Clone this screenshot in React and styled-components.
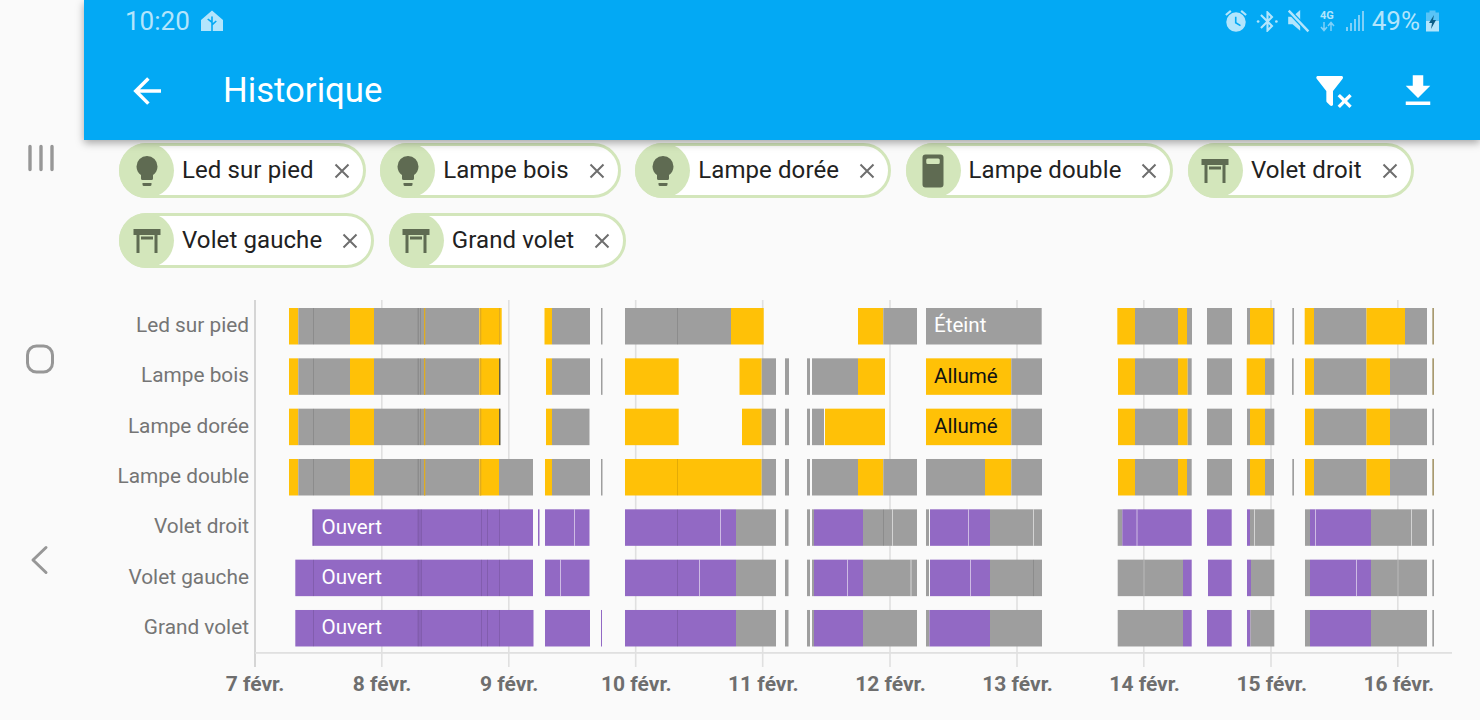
import React from 'react';
import styled, { createGlobalStyle } from 'styled-components';

const Global = createGlobalStyle`
  html, body { margin: 0; padding: 0; background: #fafafa; overflow: hidden; }
  body { font-family: Roboto, "Liberation Sans", sans-serif; }
`;

const Page = styled.div`
  display: flex;
  width: 1480px;
  height: 720px;
  background: #fafafa;
  overflow: hidden;
`;
const NavRail = styled.nav`
  width: 84px;
  flex: none;
  height: 720px;
  box-sizing: border-box;
  padding: 143px 0 144px;
  display: flex;
  flex-direction: column;
  justify-content: space-between;
  align-items: center;
`;
const NavIcon = styled.svg`
  display: block;
  width: 34px;
  height: 32px;
  margin-left: -2px;
  fill: none;
  stroke: #979797;
  stroke-linecap: round;
  stroke-linejoin: round;
`;
const Main = styled.main`
  flex: 1;
  min-width: 0;
  display: flex;
  flex-direction: column;
`;
const Header = styled.header`
  position: relative;
  z-index: 2;
  height: 140px;
  background: #03a9f4;
  box-shadow: 0 3px 8px rgba(0, 0, 0, 0.34);
  color: #fff;
  flex: none;
`;
const StatusBar = styled.div`
  height: 42px;
  box-sizing: border-box;
  padding: 0 40px 0 41px;
  display: flex;
  align-items: center;
  color: #b3e5fc;
  font-size: 26px;
`;
const StatusTime = styled.span`
  margin-right: 11px;
`;
const Spacer = styled.div`
  flex: 1;
`;
const StatusGlyph = styled.svg`
  display: block;
  flex: none;
  fill: #b3e5fc;
  margin-right: ${(p) => p.$mr || 0}px;
`;
const NetText = styled.text`
  font: 700 11px Roboto, sans-serif;
  fill: #b3e5fc;
`;
const Battery = styled.span`
  margin: 0 5px 0 -1px;
  letter-spacing: 0;
`;
const Toolbar = styled.div`
  height: 98px;
  display: flex;
  align-items: center;
  padding-left: 42px;
`;
const BarIcon = styled.svg`
  display: block;
  flex: none;
  fill: #fff;
  margin: ${(p) => p.$m || 0};
`;
const Title = styled.h1`
  margin: 0 0 2px 55px;
  font-size: 34.7px;
  font-weight: 400;
  line-height: 1;
  color: #fff;
`;
const ChipArea = styled.section`
  padding: 3px 0 0 35px;
  display: flex;
  flex-wrap: wrap;
  gap: 15px 14.5px;
  width: 1340px;
  box-sizing: border-box;
`;
const ChipBox = styled.div`
  height: 55px;
  box-sizing: border-box;
  border: 3px solid #d3e6bb;
  border-radius: 28px;
  background: #fff;
  display: flex;
  align-items: center;
  padding-right: 12px;
`;
const ChipIcon = styled.span`
  width: 55px;
  height: 55px;
  margin-left: -3px;
  flex: none;
  border-radius: 50%;
  background: #d3e6bb;
  display: flex;
  align-items: center;
  justify-content: center;
`;
const ChipGlyph = styled.svg`
  display: block;
  width: 36px;
  height: 36px;
  fill: #5f6b52;
`;
const ChipLabel = styled.span`
  margin-left: 8px;
  padding-bottom: 2px;
  font-size: 24px;
  letter-spacing: 0.1px;
  color: #212121;
  white-space: nowrap;
`;
const ChipClose = styled.svg`
  display: block;
  flex: none;
  width: 18px;
  height: 18px;
  margin-left: 19px;
  stroke: #6e6e6e;
  stroke-width: 2;
  fill: none;
`;
const Chart = styled.section`
  margin-top: 31.5px;
  display: grid;
  grid-template-columns: 165px 1fr;
  column-gap: 1px;
`;
const RowLabels = styled.div`
  padding-top: 0.5px;
  display: flex;
  flex-direction: column;
`;
const RowLabel = styled.div`
  height: 50.33px;
  display: flex;
  align-items: center;
  justify-content: flex-end;
  font-size: 20.8px;
  color: #757575;
  white-space: nowrap;
`;
const Plot = styled.svg`
  display: block;
  width: 1230px;
  height: 368px;
`;
const BarText = styled.text`
  font: 400 20.6px Roboto, sans-serif;
  dominant-baseline: central;
`;
const Axis = styled.div`
  margin: 4px 0 0 107.45px;
  display: flex;
`;
const AxisLabel = styled.div`
  width: 127.1px;
  flex: none;
  text-align: center;
  font-size: 21px;
  font-weight: 700;
  color: #6e6e6e;
  white-space: nowrap;
`;

const COLORS = {
  Y: '#ffc107',
  G: '#9e9e9e',
  P: '#9269c4',
  d: 'rgba(0,0,0,0.11)',
  w: 'rgba(255,255,255,0.55)',
  y: '#e0ac20',
  D: '#5f5a48',
  T: '#a89a70',
  l: 'rgba(255,255,255,0.3)',
};

const marksA = 'd313-314 d417.5-419 d420-421 y424-425.3 y480-481.3';
const marksB = 'd313-314 d417.5-419.5 d420.5-422 d481-482 d487-488 d499-500 d677-678';

const rows = [
  {
    label: 'Led sur pied',
    segs: `Y289-298.3 G298.3-350 Y350-374 G374-479.3 Y479.3-501.7 Y544.5-552 G552-590 G601-602.5 G625-731 Y731-763.7 Y858-883.3 G883.3-917 G926-1041.7 Y1117.3-1135 G1135-1178 Y1178-1187 G1187-1192 G1207-1232 G1247-1250 Y1250-1273 G1273-1274.5 G1292.3-1294 Y1304.7-1314 G1314-1366.5 Y1366.5-1405 G1405-1427 T1432.3-1434 ${marksA} d677-678 y499-500`,
    text: { s: 'Éteint', c: '#fff', x: 934 },
  },
  {
    label: 'Lampe bois',
    segs: `Y289-298.3 G298.3-350 Y350-374 G374-479.3 Y479.3-499 D499-500.5 Y546-552 G552-590 G601-602.5 Y625-678.7 Y739.5-761.7 G761.7-776 G785-789 G807-810 G812-858 Y858-885 Y926-1011.3 G1011.3-1042 Y1118-1135 G1135-1178 Y1178-1187.7 G1187.7-1191.7 G1207-1232 Y1246.7-1265 G1265-1274.3 G1292-1293.7 Y1305-1314 G1314-1366.5 Y1366.5-1390 G1390-1427 T1432.3-1434 ${marksA}`,
    text: { s: 'Allumé', c: '#111', x: 934 },
  },
  {
    label: 'Lampe dorée',
    segs: `Y289-298.3 G298.3-350 Y350-374 G374-479.3 Y479.3-499 D499-500.5 Y546-552 G552-589.5 Y625-678.7 Y742-761.7 G761.7-776 G785-789 G807-810 G812-824 Y825-885 Y926-1011.3 G1011.3-1042 Y1118-1135 G1135-1178 Y1178-1187.7 G1187.7-1191.7 G1207-1232 G1247-1250 Y1250-1265 G1265-1274.3 Y1305-1314 G1314-1366.5 Y1366.5-1390 G1390-1427 G1432.3-1434 ${marksA}`,
    text: { s: 'Allumé', c: '#111', x: 934 },
  },
  {
    label: 'Lampe double',
    segs: `Y289-298.3 G298.3-350 Y350-374 G374-479.3 Y479.3-499 G499-533 Y545-552 G552-590 G601-602.5 Y625-761.7 G761.7-776 G785-789 G807-810 G812-858 Y858-883.3 G883.3-917 G926-985 Y985-1011.3 G1011.3-1042 Y1118-1135 G1135-1178 Y1178-1187 G1187-1191.7 G1207-1232 G1247-1250 Y1250-1265 G1265-1274 G1292.3-1294 Y1305-1314 G1314-1366.5 Y1366.5-1390 G1390-1427 T1432.3-1434 ${marksA} d677-678`,
  },
  {
    label: 'Volet droit',
    segs: `P312.3-533 P538-539.5 P545-589.5 w574-575 P625-736 w720-721 G736-776 G785-788.5 G807-810 G812-814 P814-863 G863-917 d883-884 w892-893 G926-929 P930-990 w968-969 G990-1042 w1033-1034 G1117.7-1122.3 P1122.3-1191.7 w1136.5-1137.5 P1207-1231.7 P1247-1250 G1250-1274.3 w1254-1255 G1305-1310 P1310-1371 w1315-1316 G1371-1427 w1411-1412 G1432.3-1434 ${marksB}`,
    text: { s: 'Ouvert', c: '#fff', x: 321.5 },
  },
  {
    label: 'Volet gauche',
    segs: `P295.3-533 P545-589.5 w560-561 P625-736 w699-700 G736-776 G785-788.5 G807-810 G812-814 P814-863 w847-848 G863-917 l910-912 G926-929 P930-990 w970-971 G990-1042 d1033-1034 G1117.7-1183 l1143.5-1144.5 P1183-1191.7 P1208-1231.7 P1247-1251 G1251-1274.3 G1305-1310 P1310-1371 w1356-1357 G1371-1427 l1397.5-1398.5 G1432.3-1434 ${marksB}`,
    text: { s: 'Ouvert', c: '#fff', x: 321.5 },
  },
  {
    label: 'Grand volet',
    segs: `P295.3-533.5 P545-590 P601-602 P625-736 G736-776 G785-788.5 G807-810 G812-814 P814-863 G863-917 G926-929.5 P929.5-990 G990-1042 G1117.7-1183 P1183-1191.7 P1207-1231.7 P1247-1250.5 G1250.5-1274.3 G1305-1310 P1310-1371 G1371-1427 G1432.3-1434 ${marksB}`,
    text: { s: 'Ouvert', c: '#fff', x: 321.5 },
  },
];

const ORIGIN_X = 250;
const ORIGIN_Y = 300;
const ticks = [255, 381.8, 508.8, 635.7, 762.7, 890, 1017, 1143.8, 1271, 1397.8];
const tickNames = ['7 févr.', '8 févr.', '9 févr.', '10 févr.', '11 févr.', '12 févr.', '13 févr.', '14 févr.', '15 févr.', '16 févr.'];

const parse = (s) =>
  s
    .trim()
    .split(/\s+/)
    .map((t) => {
      const [a, b] = t.slice(1).split('-').map(Number);
      return { c: COLORS[t[0]], x: a - ORIGIN_X, w: b - a };
    });

const TimelinePlot = () => (
  <Plot viewBox="0 0 1230 368">
    {ticks.map((t, i) => (
      <rect key={t} x={t - ORIGIN_X - 0.8} y="0" width="1.6" height="367" fill={i === 0 ? '#cccccc' : '#e0e0e0'} />
    ))}
    <rect x="5" y="352" width="1197" height="1.8" fill="#e0e0e0" />
    {rows.map((r, i) => {
      const y = 308 + i * 50.33 - ORIGIN_Y;
      return (
        <g key={r.label}>
          {parse(r.segs).map((s, j) => (
            <rect key={j} x={s.x} y={y} width={s.w} height="36.5" fill={s.c} />
          ))}
          {r.text && (
            <BarText x={r.text.x - ORIGIN_X} y={y + 17.3} fill={r.text.c}>
              {r.text.s}
            </BarText>
          )}
        </g>
      );
    })}
  </Plot>
);

const bulb = 'M12,2A7,7 0 0,0 5,9C5,11.38 6.19,13.47 8,14.74V17A1,1 0 0,0 9,18H15A1,1 0 0,0 16,17V14.74C17.81,13.47 19,11.38 19,9A7,7 0 0,0 12,2M9,21A1,1 0 0,0 10,22H14A1,1 0 0,0 15,21V20H9V21Z';
const shutter = 'M3 4H21V8H19V20H17V8H7V20H5V8H3V4M8 9H16V11H8V9Z';
const plug = 'M7 1H17A2 2 0 0 1 19 3V21A2 2 0 0 1 17 23H7A2 2 0 0 1 5 21V3A2 2 0 0 1 7 1ZM8.5 3.6A1 1 0 0 0 7.5 4.6V6.4A1 1 0 0 0 8.5 7.4H15.5A1 1 0 0 0 16.5 6.4V4.6A1 1 0 0 0 15.5 3.6Z';

const Chip = ({ icon, label }) => (
  <ChipBox>
    <ChipIcon>
      <ChipGlyph viewBox="0 0 24 24">
        <path d={icon} fillRule="evenodd" />
      </ChipGlyph>
    </ChipIcon>
    <ChipLabel>{label}</ChipLabel>
    <ChipClose viewBox="0 0 18 18">
      <path d="M2.5 2.5L15.5 15.5M15.5 2.5L2.5 15.5" />
    </ChipClose>
  </ChipBox>
);

const chips = [
  [bulb, 'Led sur pied'],
  [bulb, 'Lampe bois'],
  [bulb, 'Lampe dorée'],
  [plug, 'Lampe double'],
  [shutter, 'Volet droit'],
  [shutter, 'Volet gauche'],
  [shutter, 'Grand volet'],
];

export default function App() {
  return (
    <Page>
      <Global />
      <NavRail>
        <NavIcon viewBox="0 0 34 32" strokeWidth="3.4">
          <path d="M6 3.5V26.5M17 3.5V26.5M28 3.5V26.5" />
        </NavIcon>
        <NavIcon viewBox="0 0 34 32" strokeWidth="3">
          <rect x="3.5" y="2" width="25" height="26" rx="9" />
        </NavIcon>
        <NavIcon viewBox="0 0 34 32" strokeWidth="3">
          <path d="M22 3.5L9 16L22 28.5" />
        </NavIcon>
      </NavRail>
      <Main>
        <Header>
          <StatusBar>
            <StatusTime>10:20</StatusTime>
            <StatusGlyph width="22" height="22" viewBox="0 0 22 22">
              <path fillRule="evenodd" d="M11 0.5L22 10V21H0V10ZM10.2 7V10.4L7.2 8.4L6.2 9.6L10.2 12.8V21H11.8V15.2L15.8 11.6L14.8 10.4L11.8 13V7A0.8 0.8 0 0 0 10.2 7Z" />
            </StatusGlyph>
            <Spacer />
            <StatusGlyph width="26" height="26" viewBox="0 0 24 24" $mr={6}>
              <path d="M7.88,3.39L6.6,1.86L2,5.71L3.29,7.24L7.88,3.39M22,5.72L17.4,1.86L16.11,3.39L20.71,7.25L22,5.72Z" />
              <path fillRule="evenodd" d="M12 4A9 9 0 1 0 12 22A9 9 0 1 0 12 4ZM11 8H12.5V13.25L16.5 15.62L15.75 16.85L11 14Z" />
            </StatusGlyph>
            <StatusGlyph width="25" height="25" viewBox="0 0 24 24" $mr={6}>
              <path d="M14.88,16.29L13,18.17V14.41M13,5.83L14.88,7.71L13,9.58M17.71,7.71L12,2H11V9.58L6.41,5L5,6.41L10.59,12L5,17.58L6.41,19L11,14.41V22H12L17.71,16.29L13.41,12L17.71,7.71Z" />
              <circle cx="3" cy="12" r="1.3" />
              <circle cx="20.5" cy="12" r="1.3" />
            </StatusGlyph>
            <StatusGlyph width="24" height="24" viewBox="0 0 22 22" $mr={9}>
              <path d="M2 7H6L13 1V20L6 14H2Z" />
              <path d="M2 1L20 20" stroke="#03a9f4" strokeWidth="4.5" />
              <path d="M2.5 1.5L20.5 20.5" stroke="#b3e5fc" strokeWidth="2.2" />
            </StatusGlyph>
            <StatusGlyph width="18" height="24" viewBox="0 0 18 24" $mr={8}>
              <NetText x="1" y="10">4G</NetText>
              <path d="M5 13V21M2 18L5 21.5L8 18M12 22V14M9 17L12 13.5L15 17" fill="none" stroke="#7fd0f8" strokeWidth="1.5" />
            </StatusGlyph>
            <StatusGlyph width="20" height="22" viewBox="0 0 20 22" $mr={8}>
              <g fill="#7fd0f8">
                <rect x="1" y="17" width="2" height="4" />
                <rect x="5" y="13" width="2" height="8" />
                <rect x="9" y="9" width="2" height="12" />
                <rect x="13" y="5" width="2" height="16" />
                <rect x="17" y="1" width="2" height="20" />
              </g>
            </StatusGlyph>
            <Battery>49%</Battery>
            <StatusGlyph width="15" height="22" viewBox="0 0 15 22">
              <path d="M4.5 0.5H10.5V2.5H14V12H1V2.5H4.5Z" fill="#7fd0f8" opacity="0.7" />
              <path d="M1 11H14V21.5H1Z" />
              <path d="M9 5L4 13H7L6 19L11 10H8Z" fill="#0b5d86" />
            </StatusGlyph>
          </StatusBar>
          <Toolbar>
            <BarIcon width="42" height="42" viewBox="0 0 24 24" $m="0 0 1px 0">
              <path d="M20,11V13H8L13.5,18.5L12.08,19.92L4.16,12L12.08,4.08L13.5,5.5L8,11H20Z" />
            </BarIcon>
            <Title>Historique</Title>
            <Spacer />
            <BarIcon width="40" height="40" viewBox="0 0 24 24" $m="-1px 0 0 0">
              <path d="M14.76,20.83L17.6,18L14.76,15.17L16.17,13.76L19,16.57L21.83,13.76L23.24,15.17L20.43,18L23.24,20.83L21.83,22.24L19,19.41L16.17,22.24L14.76,20.83M12,12V19.88C12.04,20.18 11.94,20.5 11.71,20.71C11.32,21.1 10.69,21.1 10.3,20.71L8.29,18.7C8.06,18.47 7.96,18.16 8,17.87V12H7.97L2.21,4.62C1.87,4.19 1.95,3.56 2.38,3.22C2.57,3.08 2.78,3 3,3V3H17V3C17.22,3 17.43,3.08 17.62,3.22C18.05,3.56 18.13,4.19 17.79,4.62L12.03,12H12Z" />
            </BarIcon>
            <BarIcon width="42" height="42" viewBox="0 0 24 24" $m="0 41px 0 44px">
              <path d="M5,20H19V18H5M19,9H15V3H9V9H5L12,16L19,9Z" />
            </BarIcon>
          </Toolbar>
        </Header>
        <ChipArea>
          {chips.map(([icon, label]) => (
            <Chip key={label} icon={icon} label={label} />
          ))}
        </ChipArea>
        <Chart>
          <RowLabels>
            {rows.map((r) => (
              <RowLabel key={r.label}>{r.label}</RowLabel>
            ))}
          </RowLabels>
          <TimelinePlot />
        </Chart>
        <Axis>
          {tickNames.map((n) => (
            <AxisLabel key={n}>{n}</AxisLabel>
          ))}
        </Axis>
      </Main>
    </Page>
  );
}
